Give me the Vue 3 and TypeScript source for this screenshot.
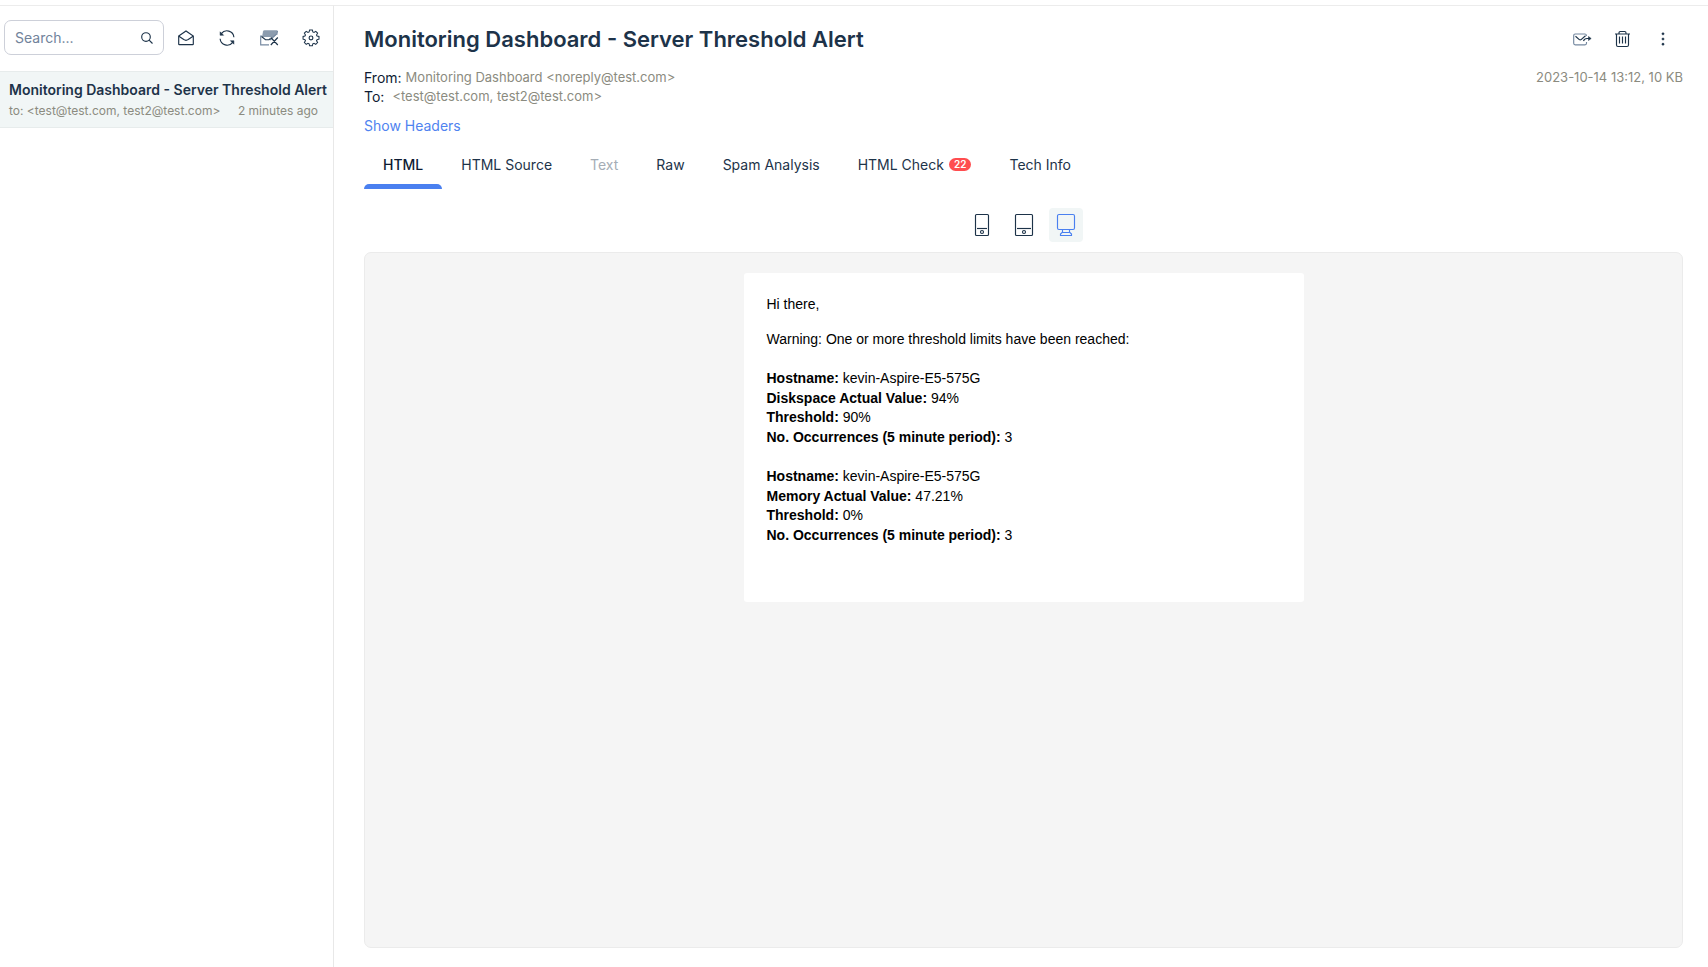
<script setup lang="ts">
import { ref } from 'vue'

interface Tab {
  label: string
  disabled?: boolean
  badge?: number
}

interface Reading {
  label: string
  value: string
}

const search = ref('')
const activeTab = ref('HTML')
const device = ref('desktop')

const subject = 'Monitoring Dashboard - Server Threshold Alert'
const recipients = '<test@test.com, test2@test.com>'
const sender = 'Monitoring Dashboard <noreply@test.com>'

const tabs: Tab[] = [
  { label: 'HTML' },
  { label: 'HTML Source' },
  { label: 'Text', disabled: true },
  { label: 'Raw' },
  { label: 'Spam Analysis' },
  { label: 'HTML Check', badge: 22 },
  { label: 'Tech Info' },
]

const alerts: Reading[][] = [
  [
    { label: 'Hostname:', value: 'kevin-Aspire-E5-575G' },
    { label: 'Diskspace Actual Value:', value: '94%' },
    { label: 'Threshold:', value: '90%' },
    { label: 'No. Occurrences (5 minute period):', value: '3' },
  ],
  [
    { label: 'Hostname:', value: 'kevin-Aspire-E5-575G' },
    { label: 'Memory Actual Value:', value: '47.21%' },
    { label: 'Threshold:', value: '0%' },
    { label: 'No. Occurrences (5 minute period):', value: '3' },
  ],
]
</script>

<template>
  <div class="app">
    <aside class="sidebar">
      <div class="toolbar">
        <label class="search">
          <input v-model="search" type="text" placeholder="Search..." aria-label="Search" />
          <svg width="12" height="12" viewBox="0 0 12 12" class="ico">
            <circle cx="5" cy="5" r="4.3" /><path d="M8.1 8.1 11.5 11.5" />
          </svg>
        </label>
        <div class="tools">
          <button type="button" aria-label="Mark all as read">
            <svg width="18" height="18" viewBox="0 0 18 18" class="ico">
              <path d="M1.7 7 9 2l7.3 5v8a.6.6 0 0 1-.6.6H2.300a.6.6 0 0 1-.6-.6z" />
              <path d="M1.900 7.300 6.800 10.600Q9 12 11.200 10.600L16.100 7.300" />
            </svg>
          </button>
          <button type="button" aria-label="Refresh">
            <svg width="18" height="18" viewBox="0 0 18 18" class="ico">
              <path d="M3.300 4.700A7 7 0 0 1 15.900 8.200M14.700 13.300A7 7 0 0 1 2.100 9.800" />
              <path class="fill" d="M2.100 2.800v3.500h3.500zM15.900 15.200v-3.500h-3.500z" />
            </svg>
          </button>
          <button type="button" aria-label="Delete all emails">
            <svg width="20" height="18" viewBox="0 0 20 18" class="ico">
              <path class="soft" d="M3 8 4 2.500Q4.300 1.200 5.500 1.200h13l-.8 4.300L14.500 8H3z" />
              <path class="dim" d="M3 7H1.700v8.800H10M18.500 2l-.8 4M17 5.500 11 11" />
              <path d="M2.500 7.500 6.500 10.700h3.500l1.500-1.200M11.800 8.500l7 7.500M18.800 8.500l-7 7.500" />
            </svg>
          </button>
          <button type="button" aria-label="Settings">
            <svg width="18" height="18" viewBox="0 0 18 18" class="ico">
              <path d="M7.500 1.400h3l.5 2.100 1.300.6 1.900-1.200 2 2-1.200 1.900.6 1.200 2.100.5v2.900l-2.100.6-.6 1.200 1.200 1.900-2 2-1.900-1.200-1.300.6-.5 2.100h-3L7 16.500l-1.300-.6-1.900 1.200-2-2L3 13.200 2.400 12l-2-.6V8.500l2-.5L3 6.800 1.800 4.900l2-2 1.900 1.200L7 3.500z" transform="translate(.7 -.35) scale(.92)" />
              <circle cx="9" cy="8.900" r="1.900" />
            </svg>
          </button>
        </div>
      </div>
      <a href="#" class="mail">
        <strong>{{ subject }}</strong>
        <span class="mail-meta"><span>to: {{ recipients }}</span><span>2 minutes ago</span></span>
      </a>
    </aside>

    <main class="message">
      <header class="head">
        <h1>{{ subject }}</h1>
        <div class="actions">
          <button type="button" aria-label="Relay message">
            <svg width="20" height="18" viewBox="0 0 20 18" class="ico">
              <path class="dim" d="M14.500 12v1.300a1.500 1.500 0 0 1-1.500 1.500H3.200a1.500 1.500 0 0 1-1.500-1.500V5.500A1.500 1.500 0 0 1 3.200 4H13q1.500 0 1.500 2" />
              <path d="M3.500 6.200 7.300 9.600q.9.700 1.800 0L13.500 5.800M11.500 11q1-2.500 3.500-2.500h2.500" />
              <path class="fill" d="M16.500 6.500 19.200 8.500 16.500 10.500z" />
            </svg>
          </button>
          <button type="button" aria-label="Delete">
            <svg width="18" height="18" viewBox="0 0 18 18" class="ico">
              <path d="M1 4h15M2.500 4v11q0 1.500 1.500 1.500h9q1.500 0 1.500-1.500V4M5 4V3q0-1.500 1.300-1.500h4.400q1.300 0 1.300 1.500v1M5.500 6.500v7M8.500 6.500v7M11.500 6.500v7" />
            </svg>
          </button>
          <button type="button" aria-label="More">
            <svg width="18" height="18" viewBox="0 0 18 18" class="ico">
              <g class="fill"><circle cx="9" cy="3.800" r="1.100" /><circle cx="9" cy="9" r="1.100" /><circle cx="9" cy="14.200" r="1.100" /></g>
            </svg>
          </button>
        </div>
      </header>

      <div class="details">
        <dl>
          <div><dt>From:</dt><dd>{{ sender }}</dd></div>
          <div class="to"><dt>To:</dt><dd>{{ recipients }}</dd></div>
        </dl>
        <span class="stamp">2023-10-14 13:12, 10 KB</span>
      </div>
      <a href="#" class="show">Show Headers</a>

      <nav class="tabs" role="tablist">
        <button
          v-for="tab in tabs"
          :key="tab.label"
          type="button"
          role="tab"
          :aria-selected="activeTab === tab.label"
          :disabled="tab.disabled"
          :class="{ active: activeTab === tab.label }"
          @click="activeTab = tab.label"
        >
          {{ tab.label }}<span v-if="tab.badge" class="badge">{{ tab.badge }}</span>
        </button>
      </nav>

      <div class="devices">
        <button type="button" aria-label="Phone" :class="{ active: device === 'phone' }" @click="device = 'phone'">
          <svg width="24" height="24" viewBox="0 0 24 24" class="ico">
            <rect x="5.500" y="1.500" width="13" height="21" rx="1" /><path d="M7 15.500h10" /><circle cx="12" cy="19" r="1.500" />
          </svg>
        </button>
        <button type="button" aria-label="Tablet" :class="{ active: device === 'tablet' }" @click="device = 'tablet'">
          <svg width="24" height="24" viewBox="0 0 24 24" class="ico">
            <rect x="3.500" y="1.500" width="17" height="21" rx="1" /><path d="M5 15.500h14" /><circle cx="12" cy="19" r="1.500" />
          </svg>
        </button>
        <button type="button" aria-label="Desktop" :class="{ active: device === 'desktop' }" @click="device = 'desktop'">
          <svg width="24" height="24" viewBox="0 0 24 24" class="ico">
            <rect x="3.500" y="1.500" width="17" height="15" rx="1.500" />
            <path d="M8.500 17v2.500M15.500 17v2.500M8 19.500h8l1.500 1.500v1.500h-11V21z" />
          </svg>
        </button>
      </div>

      <section class="preview">
        <article class="email">
          <p>Hi there,</p>
          <p>Warning: One or more threshold limits have been reached:</p>
          <div class="alerts">
            <div v-for="(alert, i) in alerts" :key="i" class="alert">
              <div v-for="row in alert" :key="row.label"><b>{{ row.label }}</b> {{ row.value }}</div>
              <br />
            </div>
          </div>
        </article>
      </section>
    </main>
  </div>
</template>

<style>
html,
body {
  margin: 0;
  background: #fff;
}
</style>

<style scoped>
.app {
  box-sizing: border-box;
  display: grid;
  grid-template-columns: 334px minmax(0, 1fr);
  min-height: 100vh;
  padding-top: 5px;
  font-family: Inter, "Liberation Sans", sans-serif;
  font-size: 14px;
  color: #1d3349;
}
* {
  box-sizing: border-box;
}
button {
  display: flex;
  align-items: center;
  justify-content: center;
  margin: 0;
  padding: 0;
  border: 0;
  background: none;
  font: inherit;
  color: inherit;
  cursor: pointer;
}
a {
  text-decoration: none;
}
.ico {
  flex: none;
  fill: none;
  stroke: currentColor;
  stroke-width: 1.15;
}
.ico .fill {
  fill: currentColor;
  stroke-width: 0.5;
}
.ico .soft {
  fill: #8c9cae;
  stroke: none;
}
.ico .dim {
  stroke: #7488a0;
}

.sidebar {
  border-top: 1px solid #ececec;
  border-right: 1px solid #e8e8e8;
}
.toolbar {
  display: flex;
  align-items: center;
  gap: 13px;
  height: 65px;
  padding: 0 13px 2px 4px;
}
.search {
  display: flex;
  align-items: center;
  width: 160px;
  height: 35px;
  padding: 0 10px;
  border: 1px solid #cdd0d9;
  border-radius: 7px;
}
.search input {
  flex: 1;
  min-width: 0;
  padding: 0;
  border: 0;
  outline: 0;
  background: none;
  font: inherit;
  font-size: 14px;
  color: inherit;
}
.search input::placeholder {
  color: #71839b;
  opacity: 1;
}
.tools {
  flex: 1;
  display: flex;
  justify-content: space-between;
}
.mail {
  display: block;
  height: 57px;
  padding: 8px 15px 0 9px;
  border: solid #e7ecec;
  border-width: 1px 0;
  background: #f1f6f6;
  color: #1d3349;
}
.mail strong {
  display: block;
  line-height: 20px;
  font-size: 14px;
  font-weight: 600;
  white-space: nowrap;
}
.mail-meta {
  display: flex;
  justify-content: space-between;
  line-height: 21px;
  font-size: 12px;
  color: #8b8b80;
}

.message {
  display: flex;
  flex-direction: column;
  min-width: 0;
  padding: 19px 25px 19px 30px;
  border-top: 1px solid #ececec;
}
.head {
  display: flex;
  align-items: center;
  justify-content: space-between;
  height: 28px;
}
h1 {
  margin: 0;
  line-height: 28px;
  font-size: 22px;
  font-weight: 600;
}
.actions {
  display: flex;
  gap: 22px;
  padding-right: 11px;
}
.details {
  display: flex;
  justify-content: space-between;
  margin-top: 15px;
  line-height: 19px;
}
dl,
dd {
  margin: 0;
}
dl > div {
  display: flex;
  gap: 4px;
}
dl > .to {
  gap: 8px;
}
dt {
  color: #0d1b33;
}
dd,
.stamp {
  font-size: 13px;
  color: #8b8b80;
}
.show {
  align-self: flex-start;
  margin-top: 10px;
  line-height: 20px;
  color: #4f83f0;
}
.tabs {
  display: flex;
  margin-top: 6px;
}
.tabs button {
  position: relative;
  height: 47px;
  padding: 0 19px 2px;
}
.tabs button:disabled {
  color: #a5adb6;
}
.tabs .active {
  color: #0d1b33;
  font-weight: 500;
}
.tabs .active::after {
  content: "";
  position: absolute;
  inset: auto 0 0;
  height: 5px;
  border-radius: 5px 5px 0 0;
  background: #4a80f0;
}
.badge {
  height: 13px;
  margin-left: 5px;
  padding: 0 5px;
  border-radius: 7px;
  background: #ff4d4f;
  line-height: 13px;
  font-size: 10px;
  font-weight: 600;
  color: #fff;
}
.devices {
  display: flex;
  justify-content: center;
  gap: 8px;
  margin: 19px 0 10px;
}
.devices button {
  width: 34px;
  height: 34px;
  border-radius: 4px;
}
.devices .active {
  background: #f1f6f6;
  color: #4a80f0;
}
.preview {
  flex: 1;
  padding: 20px;
  border: 1px solid #ebebeb;
  border-radius: 7px;
  background: #f5f5f5;
}
.email {
  max-width: 560px;
  margin: 0 auto;
  padding: 22px 23px;
  border-radius: 3px;
  background: #fff;
  font-family: "Liberation Sans", Arial, sans-serif;
  line-height: 1.4;
  color: #000;
}
.email p {
  margin: 0 0 15px;
}
.alerts {
  padding: 5px 0 15px;
}
</style>
